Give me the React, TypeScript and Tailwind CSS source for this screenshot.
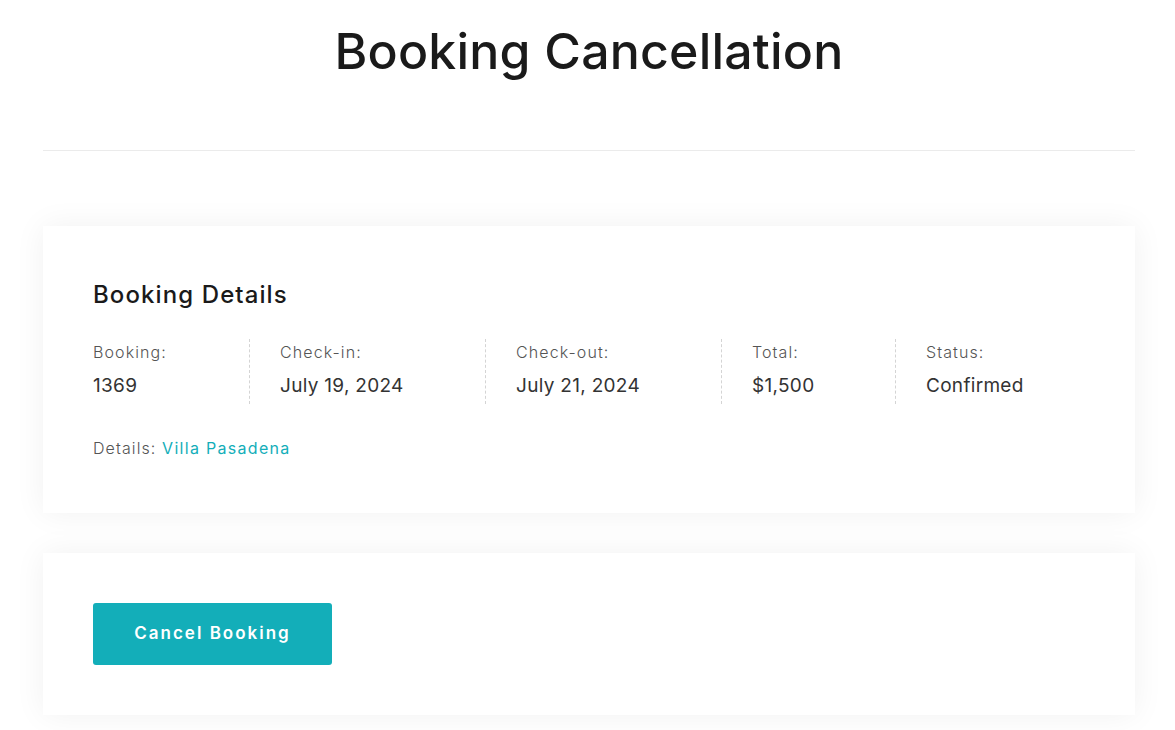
import React from 'react';

const columns = [
  { label: 'Booking:', value: '1369', width: 'w-[156px]' },
  { label: 'Check-in:', value: 'July 19, 2024', width: 'w-[236px]' },
  { label: 'Check-out:', value: 'July 21, 2024', width: 'w-[236px]' },
  { label: 'Total:', value: '$1,500', width: 'w-[174px]' },
  { label: 'Status:', value: 'Confirmed', width: 'flex-1' },
];

export default function App() {
  return (
    <div className="min-h-[730px] bg-white font-['Inter',sans-serif] text-[#333]">
      <div className="mx-[43px] w-[1092px]">
        {/* Page title */}
        <div className="flex h-[151px] items-start justify-center border-b border-[#ebebeb] pt-[19px]">
          <h1 className="text-[50px] font-medium leading-[64px] tracking-[0.2px] text-[#1a1a1a]">
            Booking Cancellation
          </h1>
        </div>

        {/* Details card */}
        <div className="mt-[75px] bg-white px-[50px] pb-[55px] pt-[55px] shadow-[0_0_30px_rgba(0,0,0,0.06)]">
          <h2 className="text-[24px] font-medium leading-[28px] tracking-[1.1px] text-[#1a1a1a]">Booking Details</h2>
          <div className="mt-[30px] flex">
            {columns.map((col, i) => (
              <div
                key={col.label}
                className={`${col.width} ${i > 0 ? 'border-l border-dashed border-[#d4d4d4] pl-[30px]' : ''} flex h-[65px] flex-col pt-[3px]`}
              >
                <span className="text-[16px] font-light leading-[20px] tracking-[1.1px] text-[#555]">{col.label}</span>
                <span className="mt-[12px] text-[19px] leading-[24px] tracking-[0.3px] text-[#333]">{col.value}</span>
              </div>
            ))}
          </div>
          <p className="mt-[34px] text-[16px] font-light leading-[20px] tracking-[1.1px] text-[#555]">
            Details: <a className="font-normal tracking-[1.3px] text-[#13aeb9]">Villa Pasadena</a>
          </p>
        </div>

        {/* Action card */}
        <div className="mt-[40px] bg-white px-[50px] py-[50px] shadow-[0_0_30px_rgba(0,0,0,0.06)]">
          <button className="h-[62px] w-[239px] rounded-[3px] bg-[#13aeb9] text-[17px] font-semibold tracking-[2px] text-white">
            Cancel Booking
          </button>
        </div>
      </div>
    </div>
  );
}
